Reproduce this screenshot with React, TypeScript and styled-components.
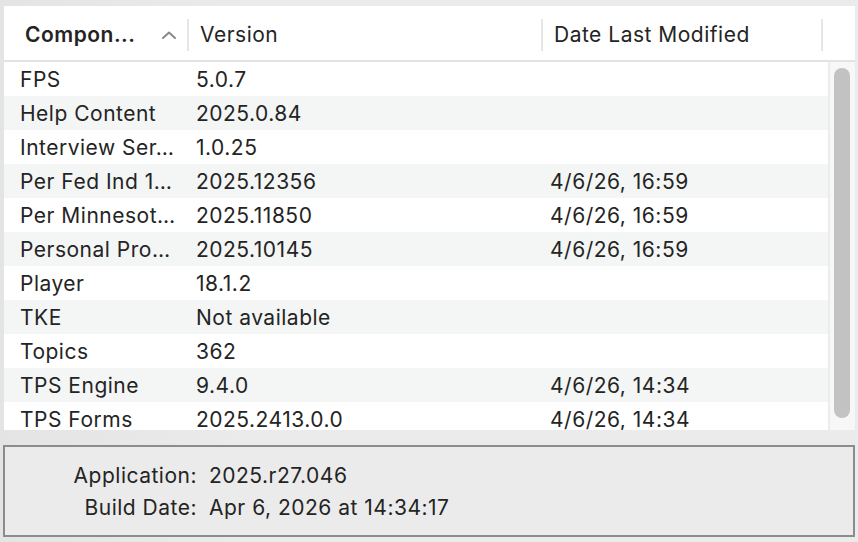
import styled, { createGlobalStyle } from "styled-components";

const GlobalStyle = createGlobalStyle`
	html, body {
		margin: 0;
		padding: 0;
		background: #e8e8e8;
	}
	body {
		font-family: Inter, "Noto Sans", "Liberation Sans", sans-serif;
		color: #242424;
		letter-spacing: 0.5px;
	}
`;

const COLS = "185px 354px 280px 1fr";

const Window = styled.div`
	width: 858px;
	height: 542px;
	box-sizing: border-box;
	padding: 6px 3px 5px 3px;
	display: flex;
	flex-direction: column;
	background: linear-gradient(90deg, #e4e4e4 0%, #ebebeb 30%, #ebebeb 100%);
`;

const TablePanel = styled.div`
	height: 424px;
	margin: 0 0 0 1px;
	background: #ffffff;
	display: flex;
	flex-direction: column;
	overflow: hidden;
`;

const HeaderRow = styled.div`
	height: 56px;
	flex: none;
	box-sizing: border-box;
	padding-top: 3px;
	display: grid;
	grid-template-columns: ${COLS};
	align-items: center;
	border-bottom: 2px solid #e3e3e3;
`;

const HeaderCell = styled.div<{ $bold?: boolean; $pad: number }>`
	position: relative;
	height: 32px;
	display: flex;
	align-items: center;
	padding-left: ${(p) => p.$pad}px;
	font-size: 21px;
	font-weight: ${(p) => (p.$bold ? 600 : 400)};
	border-right: 2px solid #e6e6e6;
	box-sizing: border-box;
	white-space: nowrap;
`;

const SortArrow = styled.svg`
	position: absolute;
	left: 157px;
	top: 11px;
`;

const Body = styled.div`
	flex: 1;
	display: flex;
	min-height: 0;
`;

const Rows = styled.div`
	flex: 1;
	overflow: hidden;
`;

const Row = styled.div<{ $alt: boolean }>`
	height: 34px;
	display: grid;
	grid-template-columns: ${COLS};
	align-items: center;
	background: ${(p) => (p.$alt ? "#f4f5f5" : "#ffffff")};
	font-size: 21px;
`;

const Cell = styled.div<{ $pad: number }>`
	padding-left: ${(p) => p.$pad}px;
	white-space: nowrap;
	overflow: hidden;
`;

const ScrollTrack = styled.div`
	width: 27px;
	flex: none;
	background: #f7f7f7;
	border-left: 2px solid #ececec;
	box-sizing: border-box;
	padding: 6px 0 0 4px;
`;

const ScrollThumb = styled.div`
	width: 16px;
	height: 350px;
	border-radius: 8px;
	background: #c2c2c2;
`;

const InfoBox = styled.div`
	margin-top: 15px;
	height: 92px;
	box-sizing: border-box;
	border: 2px solid #8c8c8c;
	background: #ebebeb;
	display: grid;
	grid-template-columns: 192px 1fr;
	column-gap: 12px;
	align-content: start;
	padding-top: 13px;
	font-size: 21px;
	line-height: 32px;
`;

const InfoLabel = styled.div`
	text-align: right;
`;

const InfoValue = styled.div``;

const rows: [string, string, string][] = [
	["FPS", "5.0.7", ""],
	["Help Content", "2025.0.84", ""],
	["Interview Ser…", "1.0.25", ""],
	["Per Fed Ind 1…", "2025.12356", "4/6/26, 16:59"],
	["Per Minnesot…", "2025.11850", "4/6/26, 16:59"],
	["Personal Pro…", "2025.10145", "4/6/26, 16:59"],
	["Player", "18.1.2", ""],
	["TKE", "Not available", ""],
	["Topics", "362", ""],
	["TPS Engine", "9.4.0", "4/6/26, 14:34"],
	["TPS Forms", "2025.2413.0.0", "4/6/26, 14:34"],
];

export default function App() {
	return (
		<>
			<GlobalStyle />
			<Window>
				<TablePanel>
					<HeaderRow>
						<HeaderCell $bold $pad={21}>
							Compon...
							<SortArrow width="16" height="10" viewBox="0 0 16 10">
								<path
									d="M2 8 L8 2.5 L14 8"
									fill="none"
									stroke="#8a8a8a"
									strokeWidth="2"
									strokeLinecap="round"
									strokeLinejoin="round"
								/>
							</SortArrow>
						</HeaderCell>
						<HeaderCell $pad={11}>Version</HeaderCell>
						<HeaderCell $pad={11}>Date Last Modified</HeaderCell>
						<div />
					</HeaderRow>
					<Body>
						<Rows>
							{rows.map(([name, version, date], i) => (
								<Row key={name} $alt={i % 2 === 1}>
									<Cell $pad={16}>{name}</Cell>
									<Cell $pad={7}>{version}</Cell>
									<Cell $pad={7}>{date}</Cell>
									<div />
								</Row>
							))}
						</Rows>
						<ScrollTrack>
							<ScrollThumb />
						</ScrollTrack>
					</Body>
				</TablePanel>
				<InfoBox>
					<InfoLabel>Application:</InfoLabel>
					<InfoValue>2025.r27.046</InfoValue>
					<InfoLabel>Build Date:</InfoLabel>
					<InfoValue>Apr 6, 2026 at 14:34:17</InfoValue>
				</InfoBox>
			</Window>
		</>
	);
}
